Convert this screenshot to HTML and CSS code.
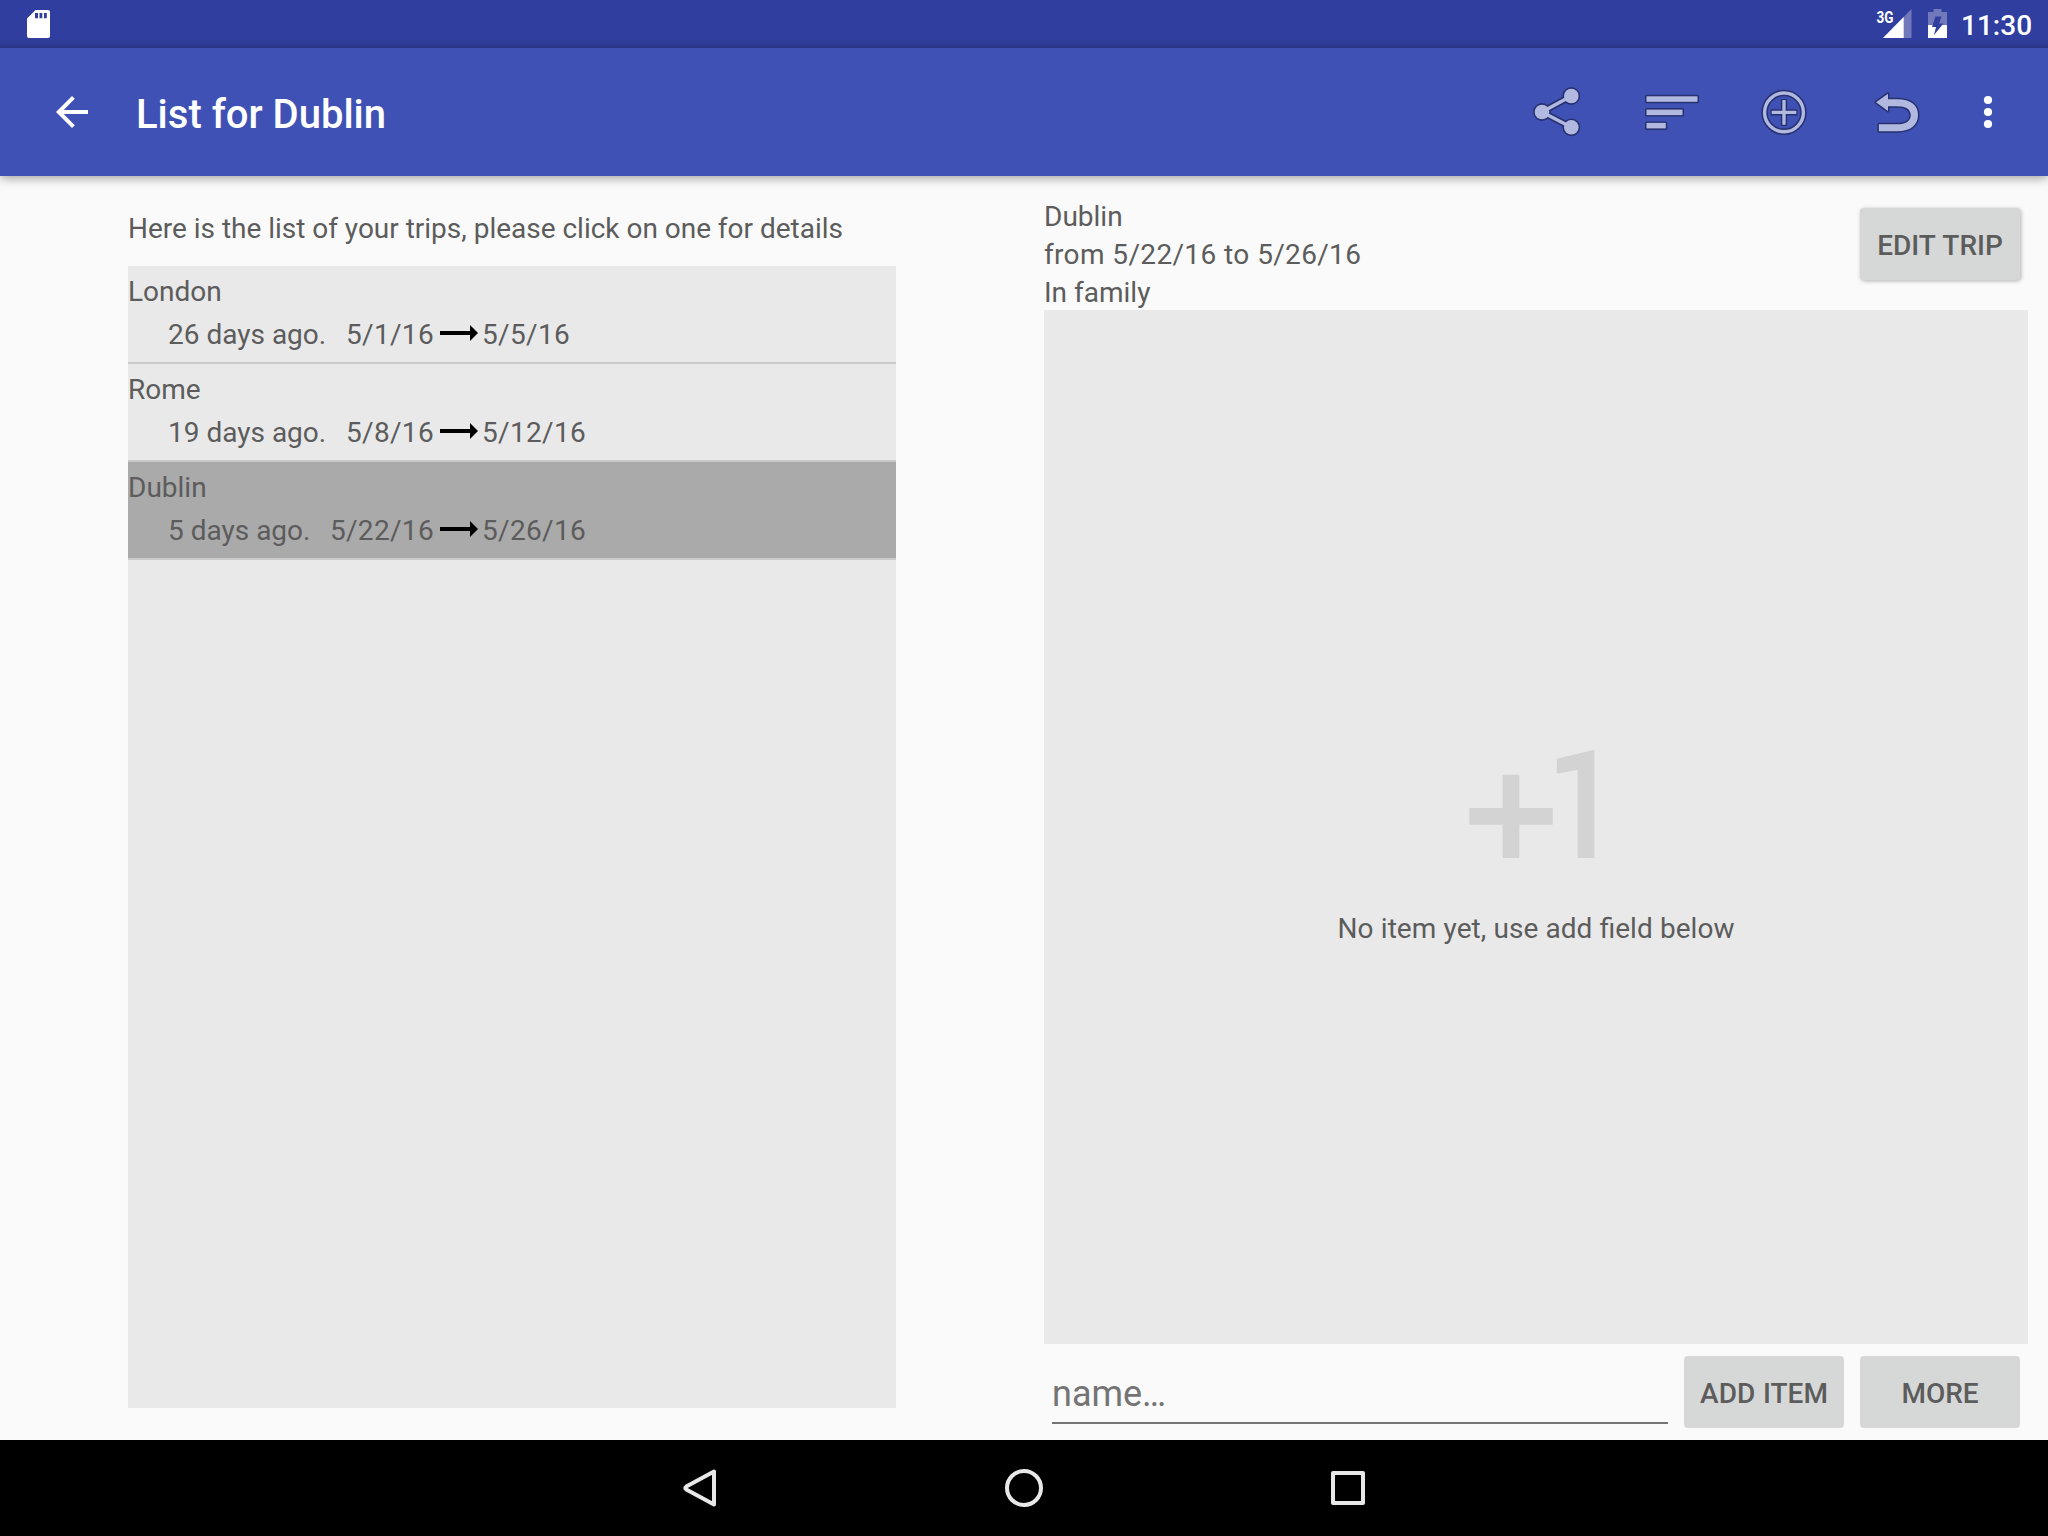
FILE: index.html
```html
<!DOCTYPE html>
<html lang="en">
<head>
<meta charset="utf-8">
<title>List for Dublin</title>
<link rel="stylesheet" href="styles.css">
</head>
<body>
<header class="status-bar">
  <svg class="sd-card" width="23" height="28" viewBox="0 0 23 28"><path fill="#fff" fill-rule="evenodd" d="M8.500 0H21a2 2 0 0 1 2 2V26a2 2 0 0 1-2 2H2a2 2 0 0 1-2-2V8.500ZM8 3V8.300H11V3ZM12.500 3V8.300H15.300V3ZM17 3V8.300H19.800V3Z"/></svg>
  <div class="status-right">
    <svg class="signal" width="40" height="38" viewBox="-4 -5 40 38">
      <path fill="#7179ba" d="M35.500 0V29H7Z"/>
      <path fill="#fff" d="M27.700 8V29H7Z"/>
      <text class="network" x="0.500" y="13.700" textLength="17" lengthAdjust="spacingAndGlyphs">3G</text>
    </svg>
    <svg class="battery" width="19" height="29" viewBox="0 0 19 29">
      <path fill="#7179ba" d="M5.500 0H13.500V3H19V16H0V3H5.500Z"/>
      <path fill="#fff" d="M0 16H19V29H0Z"/>
      <path fill="#303e9f" d="M7.500 7.500H13.500L11 14.500H15.500L6 26L8 18H4Z"/>
    </svg>
    <span class="clock">11:30</span>
  </div>
</header>

<nav class="toolbar">
  <svg class="back" width="32" height="32" viewBox="0 0 32 32"><path fill="#fff" d="M32 14H7.700L18.800 2.800L16 0L0 16L16 32L18.800 29.200L7.700 18H32Z"/></svg>
  <h1 class="title">List for Dublin</h1>
  <div class="actions">
    <svg class="action" viewBox="0 0 112 128">
      <g class="edge"><path d="M67.300 48L38 64L67.300 79.300" fill="none" stroke-width="6.800"/><circle cx="67.300" cy="48" r="8.900"/><circle cx="38" cy="64" r="8.900"/><circle cx="67.300" cy="79.300" r="8.900"/></g>
      <g class="face"><path d="M67.300 48L38 64L67.300 79.300" fill="none" stroke-width="3.500"/><circle cx="67.300" cy="48" r="7.300"/><circle cx="38" cy="64" r="7.300"/><circle cx="67.300" cy="79.300" r="7.300"/></g>
    </svg>
    <svg class="action outlined" viewBox="0 0 112 128">
      <rect x="30.500" y="48.300" width="51" height="5.500"/><rect x="30.500" y="61.600" width="36" height="5.500"/><rect x="30.500" y="74.900" width="19.300" height="5.500"/>
    </svg>
    <svg class="action" viewBox="0 0 112 128">
      <g class="ring-edge"><circle cx="56" cy="64.400" r="19.400" stroke-width="6.400"/><path d="M42.500 64.400H69.500M56 50.900V77.900" stroke-width="6.200"/></g>
      <g class="ring-face"><circle cx="56" cy="64.400" r="19.400" stroke-width="3.400"/><path d="M43.700 64.400H68.300M56 52.100V76.700" stroke-width="3.300"/></g>
    </svg>
    <svg class="action outlined" viewBox="0 0 112 128">
      <path d="M36 54.300L48 45.700V51.300H57C71 51.300 78 57.500 78 67S71 83.300 57 83.300H38.900V76.300H57C66 76.300 70.800 72.800 70.800 67.200S66 58.300 57 58.300H48V63Z"/>
    </svg>
    <svg class="overflow" viewBox="0 0 72 128" fill="#fff"><circle cx="36" cy="52" r="4.100"/><circle cx="36" cy="64" r="4.100"/><circle cx="36" cy="76" r="4.100"/></svg>
  </div>
</nav>

<main class="content">
  <section class="trips">
    <p class="intro">Here is the list of your trips, please click on one for details</p>
    <ul class="trip-list">
      <li class="trip">
        <div class="city">London</div>
        <div class="when"><span class="start"><span>26 days ago.</span><span class="date">5/1/16</span></span><svg class="arrow" viewBox="0 0 38 16"><path d="M0 6H30V0L38 8L30 16V10H0Z"/></svg><span class="date">5/5/16</span></div>
      </li>
      <li class="trip">
        <div class="city">Rome</div>
        <div class="when"><span class="start"><span>19 days ago.</span><span class="date">5/8/16</span></span><svg class="arrow" viewBox="0 0 38 16"><path d="M0 6H30V0L38 8L30 16V10H0Z"/></svg><span class="date">5/12/16</span></div>
      </li>
      <li class="trip selected">
        <div class="city">Dublin</div>
        <div class="when"><span class="start"><span>5 days ago.</span><span class="date">5/22/16</span></span><svg class="arrow" viewBox="0 0 38 16"><path d="M0 6H30V0L38 8L30 16V10H0Z"/></svg><span class="date">5/26/16</span></div>
      </li>
    </ul>
  </section>

  <section class="detail">
    <div class="summary">
      <div class="facts">
        <div>Dublin</div>
        <div class="date range">from 5/22/16 to 5/26/16</div>
        <div>In family</div>
      </div>
      <button class="button raised">EDIT TRIP</button>
    </div>
    <div class="items">
      <svg class="plus-one" viewBox="0 0 24 24"><path d="M10 8H8v4H4v2h4v4h2v-4h4v-2h-4zM14.500 6.080V7.900L17 7.400V18h2V5z"/></svg>
      <p class="empty">No item yet, use add field below</p>
    </div>
    <form class="add-row">
      <input class="name" type="text" placeholder="name…">
      <button class="button" type="button">ADD ITEM</button>
      <button class="button" type="button">MORE</button>
    </form>
  </section>
</main>

<footer class="nav-bar">
  <svg viewBox="0 0 48 48"><path d="M38 7.500V40.500L10.300 25.500Q8.300 24 10.300 22.500Z"/></svg>
  <svg viewBox="0 0 48 48"><circle cx="24" cy="24" r="17"/></svg>
  <svg viewBox="0 0 48 48"><rect x="9" y="9" width="30" height="30"/></svg>
</footer>
</body>
</html>
```
FILE: styles.css
```css
* { box-sizing: border-box; }

body {
  margin: 0;
  width: 2048px;
  height: 1536px;
  display: flex;
  flex-direction: column;
  overflow: hidden;
  background: #fafafa;
  color: #5c5c5c;
  font: 28px/38px Roboto, sans-serif;
}

p, h1, ul { margin: 0; padding: 0; }
svg { display: block; flex: none; }

.status-bar {
  height: 48px;
  flex: none;
  display: flex;
  justify-content: space-between;
  padding: 4px 16px 0 26.5px;
  background: linear-gradient(#303e9f 40px, #2c3992 45px, #27327f 48px);
}
.sd-card { margin-top: 6px; }
.status-right { display: flex; }
.signal { margin-right: 16px; }
.battery { margin-top: 5px; }
.network { font: 700 17px Roboto, sans-serif; fill: #fff; }
.clock {
  margin: 5px 0 0 14px;
  width: 71px;
  line-height: 33px;
  font-weight: 500;
  color: #fff;
  white-space: nowrap;
}

.toolbar {
  height: 128px;
  flex: none;
  display: flex;
  align-items: center;
  padding: 0 24px 0 56px;
  background: #3f51b5;
  box-shadow: 0 2px 10px rgba(0, 0, 0, 0.38);
  clip-path: inset(0 0 -20px 0);
}
.title {
  margin: 5px 0 0 48px;
  font-size: 40px;
  line-height: 48px;
  font-weight: 500;
  color: #fff;
}
.actions { display: flex; margin-left: auto; }
.action { width: 112px; height: 128px; }
.overflow { width: 72px; height: 128px; }
.edge { fill: #27316f; stroke: #27316f; }
.edge circle, .face circle { stroke: none; }
.face { fill: #b2b9e1; stroke: #b2b9e1; }
.outlined { fill: #b2b9e1; stroke: #27316f; stroke-width: 3; stroke-linejoin: round; paint-order: stroke; }
.ring-edge { fill: none; stroke: #27316f; }
.ring-face { fill: none; stroke: #b2b9e1; }

.content {
  flex: 1;
  min-height: 0;
  display: flex;
  justify-content: space-between;
  padding: 20px 20px 12px 128px;
}

.trips {
  width: 768px;
  display: flex;
  flex-direction: column;
  padding: 14px 0 20px;
}
.intro { height: 56px; word-spacing: -0.08px; }
.trip-list { flex: 1; background: #e9e9e9; list-style: none; }
.trip { height: 98px; padding-top: 7px; border-bottom: 2px solid #cacaca; }
.selected { background: #aaa; }
.when { display: flex; align-items: center; margin-top: 5px; padding-left: 40px; }
.start { width: 266px; display: flex; justify-content: space-between; }
.date { letter-spacing: 0.33px; }
.range { word-spacing: 0.3px; }
.arrow { width: 38px; height: 16px; margin: 0 4px 4px 6px; }

.detail { width: 984px; display: flex; flex-direction: column; }
.summary { display: flex; justify-content: space-between; height: 114px; padding: 2px 8px 0 0; }
.button {
  width: 160px;
  height: 72px;
  padding: 4px 0 0;
  border: 0;
  border-radius: 4px;
  background: #d6d8d7;
  color: #5c5c5c;
  font: 500 28px/38px Roboto, sans-serif;
  word-spacing: 0.8px;
  white-space: nowrap;
}
.raised { margin-top: 10px; box-shadow: 1px 1px 4px rgba(0, 0, 0, 0.3); }
.items {
  flex: 1;
  display: flex;
  flex-direction: column;
  align-items: center;
  justify-content: center;
  background: #e9e9e9;
}
.plus-one { width: 200px; height: 200px; fill: #d3d3d3; }
.empty { padding-top: 2px; height: 38px; word-spacing: 0.4px; }
.add-row { display: flex; gap: 16px; margin: 0; padding: 12px 8px 0; height: 84px; }
.name {
  flex: 1;
  min-width: 0;
  height: 68px;
  padding: 10px 0 0;
  border: 0;
  border-bottom: 2px solid #747474;
  background: none;
  color: #5c5c5c;
  font: 36px Roboto, sans-serif;
}
.name::placeholder { color: #747474; opacity: 1; }

.nav-bar {
  height: 96px;
  flex: none;
  display: flex;
  align-items: center;
  justify-content: center;
  gap: 276px;
  background: #000;
}
.nav-bar svg { width: 48px; height: 48px; fill: none; stroke: #e8e8e8; stroke-width: 4; stroke-linejoin: round; }
```
